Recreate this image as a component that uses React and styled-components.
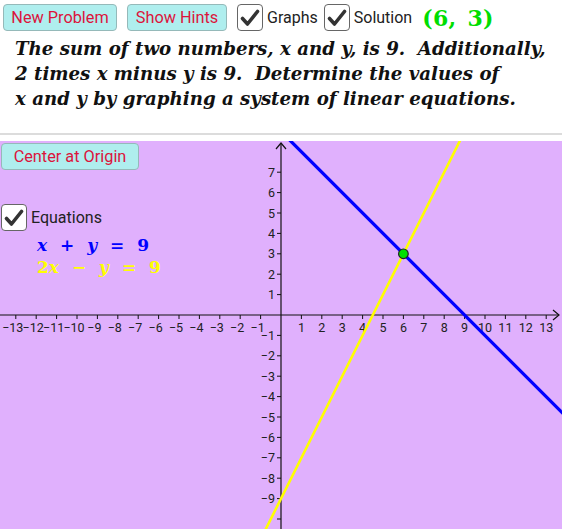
import React from 'react';
import styled, { createGlobalStyle } from 'styled-components';

const GlobalStyle = createGlobalStyle`
  html, body {
    margin: 0;
    padding: 0;
    background: #ffffff;
  }
  body {
    font-family: Roboto, "Liberation Sans", sans-serif;
    overflow: hidden;
  }
`;

const Page = styled.div`
  width: 562px;
  height: 529px;
  display: flex;
  flex-direction: column;
  overflow: hidden;
`;

const Header = styled.div`
  height: 133px;
  display: flex;
  flex-direction: column;
  border-bottom: 2px solid #dcdcdc;
`;

const Toolbar = styled.div`
  display: flex;
  align-items: center;
  padding: 4px 3px 0;
  height: 27px;
`;

const Button = styled.button`
  box-sizing: border-box;
  height: 27px;
  width: ${(p) => p.$w}px;
  margin-right: ${(p) => p.$gap || 0}px;
  padding: 0;
  background: #afeeee;
  border: 1.5px solid #95b9b9;
  border-radius: 4px;
  color: #dc143c;
  font-family: Roboto, "Liberation Sans", sans-serif;
  font-size: 16.3px;
  line-height: 24px;
  text-align: center;
`;

const CheckWrap = styled.label`
  display: flex;
  align-items: center;
  margin-right: ${(p) => p.$gap || 0}px;
  color: #222;
  font-family: Roboto, "Liberation Sans", sans-serif;
  font-size: 16px;
`;

const Box = styled.span`
  box-sizing: border-box;
  width: 26px;
  height: 27px;
  border: 1.5px solid #666;
  border-radius: 4px;
  background: #fff;
  display: flex;
  align-items: center;
  justify-content: center;
  margin-right: 4px;
`;

const Answer = styled.span`
  font-family: "DejaVu Serif", "Liberation Serif", serif;
  font-weight: bold;
  font-size: 22px;
  color: #00dd00;
  letter-spacing: 0.3px;
  word-spacing: 3px;
`;

const Problem = styled.p`
  margin: 5px 0 0 15px;
  font-family: "DejaVu Serif", "Liberation Serif", serif;
  font-style: italic;
  font-weight: bold;
  font-size: 18.2px;
  line-height: 25px;
  color: #111;
  white-space: nowrap;
`;

const Gap = styled.div`
  height: 6px;
`;

const Canvas = styled.div`
  position: relative;
  flex: 1;
  background: #e0b0fd;
`;

const Overlay = styled.div`
  position: absolute;
  left: ${(p) => p.$x}px;
  top: ${(p) => p.$y}px;
`;

const EqList = styled.div`
  margin: 4px 0 0 36px;
  display: flex;
  flex-direction: column;
  gap: 1px;
`;

const Eq = styled.div`
  font-family: "DejaVu Serif", "Liberation Serif", serif;
  font-weight: bold;
  font-size: 17px;
  line-height: 21px;
  color: ${(p) => p.$color};
  word-spacing: 7px;
  white-space: nowrap;
  i {
    font-style: italic;
  }
`;

function Check({ label, gap }) {
  return (
    <CheckWrap $gap={gap}>
      <Box>
        <svg width="20" height="18" viewBox="0 0 20 18">
          <path d="M2.5 9.5 L7.5 15 L17.5 2.5" fill="none" stroke="#333" strokeWidth="3.6" strokeLinecap="round" strokeLinejoin="round" />
        </svg>
      </Box>
      {label}
    </CheckWrap>
  );
}

const W = 562;
const H = 388;
const OX = 281;
const OY = 174;
const S = 20.4;

const px = (x) => OX + x * S;
const py = (y) => OY - y * S;

const labelFont = "Roboto, 'Liberation Sans', sans-serif";

function Graph() {
  const xs = [];
  for (let i = -13; i <= 13; i++) if (i !== 0) xs.push(i);
  const ys = [];
  for (let i = -10; i <= 7; i++) if (i !== 0) ys.push(i);

  return (
    <svg width={W} height={H} style={{ display: 'block' }}>
      <line x1="0" y1={OY} x2="559" y2={OY} stroke="#111" strokeWidth="1.2" />
      <path d={`M553 ${OY - 5} L559 ${OY} L553 ${OY + 5}`} fill="none" stroke="#111" strokeWidth="1.2" />
      <line x1={OX} y1="2" x2={OX} y2={H} stroke="#111" strokeWidth="1.2" />
      <path d={`M${OX - 5} 8 L${OX} 2 L${OX + 5} 8`} fill="none" stroke="#111" strokeWidth="1.2" />

      {xs.map((i) => (
        <g key={'x' + i}>
          <line x1={px(i)} y1={OY} x2={px(i)} y2={OY + 4} stroke="#111" strokeWidth="1" />
          <text
            x={px(i) + (i < 0 ? -3 : 0)}
            y={OY + 17}
            textAnchor="middle"
            fontFamily={labelFont}
            fontSize="12.5"
            fill="#222"
          >
            {i < 0 ? '\u2212' + -i : i}
          </text>
        </g>
      ))}
      {ys.map((i) => (
        <g key={'y' + i}>
          <line x1={OX - 4} y1={py(i)} x2={OX} y2={py(i)} stroke="#111" strokeWidth="1" />
          {i >= -9 && (
            <text
              x={OX - 6}
              y={py(i) + 4.5}
              textAnchor="end"
              fontFamily={labelFont}
              fontSize="12.5"
              fill="#222"
            >
              {i < 0 ? '\u2212' + -i : i}
            </text>
          )}
        </g>
      ))}

      <line x1={px(-1)} y1={py(-11)} x2={px(10)} y2={py(11)} stroke="#ffff00" strokeWidth="2.6" />
      <line x1={px(-1)} y1={py(10)} x2={px(15)} y2={py(-6)} stroke="#0000ff" strokeWidth="3.2" />
      <circle cx={px(6)} cy={py(3)} r="4.8" fill="#00e000" stroke="#222" strokeWidth="1.2" />
    </svg>
  );
}

export default function App() {
  return (
    <Page>
      <GlobalStyle />
      <Header>
        <Toolbar>
          <Button $w={114} $gap={10}>New Problem</Button>
          <Button $w={100} $gap={10}>Show Hints</Button>
          <Check label="Graphs" gap={6} />
          <Check label="Solution" gap={10} />
          <Answer>(6, 3)</Answer>
        </Toolbar>
        <Problem>
          The sum of two numbers, x and y, is 9.&nbsp; Additionally,
          <br />
          2 times x minus y is 9.&nbsp; Determine the values of
          <br />
          x and y by graphing a system of linear equations.
        </Problem>
      </Header>
      <Gap />
      <Canvas>
        <Graph />
        <Overlay $x={1} $y={2}>
          <Button $w={138}>Center at Origin</Button>
        </Overlay>
        <Overlay $x={1} $y={63}>
          <Check label="Equations" />
          <EqList>
            <Eq $color="#0000ff">
              <i>x</i> + <i>y</i> = 9
            </Eq>
            <Eq $color="#ffff00">
              2<i>x</i> − <i>y</i> = 9
            </Eq>
          </EqList>
        </Overlay>
      </Canvas>
    </Page>
  );
}
